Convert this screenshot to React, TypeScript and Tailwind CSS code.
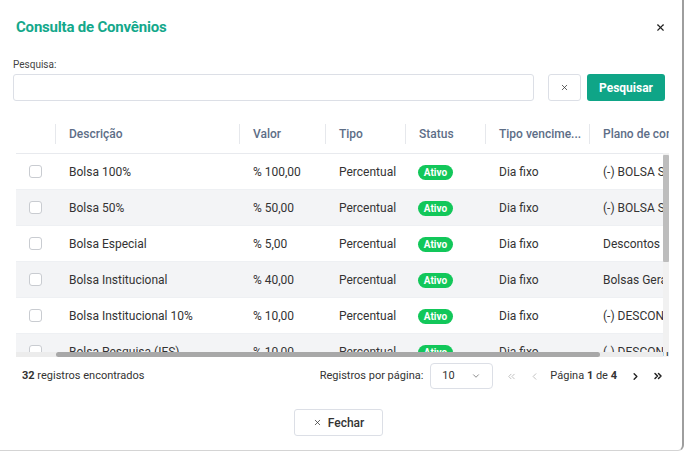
import React from 'react';
import { X, ChevronDown, ChevronsLeft, ChevronLeft, ChevronRight, ChevronsRight } from 'lucide-react';

interface Convenio {
  descricao: string;
  valor: string;
  tipo: string;
  status: string;
  vencimento: string;
  plano: string;
}

const convenios: Convenio[] = [
  { descricao: 'Bolsa 100%', valor: '% 100,00', tipo: 'Percentual', status: 'Ativo', vencimento: 'Dia fixo', plano: '(-) BOLSA SWE 100%' },
  { descricao: 'Bolsa 50%', valor: '% 50,00', tipo: 'Percentual', status: 'Ativo', vencimento: 'Dia fixo', plano: '(-) BOLSA SOCIAL 50%' },
  { descricao: 'Bolsa Especial', valor: '% 5,00', tipo: 'Percentual', status: 'Ativo', vencimento: 'Dia fixo', plano: 'Descontos na mensalidade' },
  { descricao: 'Bolsa Institucional', valor: '% 40,00', tipo: 'Percentual', status: 'Ativo', vencimento: 'Dia fixo', plano: 'Bolsas Gerais' },
  { descricao: 'Bolsa Institucional 10%', valor: '% 10,00', tipo: 'Percentual', status: 'Ativo', vencimento: 'Dia fixo', plano: '(-) DESCONTOS CONCEDIDOS' },
  { descricao: 'Bolsa Pesquisa (IES)', valor: '% 10,00', tipo: 'Percentual', status: 'Ativo', vencimento: 'Dia fixo', plano: '(-) DESCONTOS CONCEDIDOS' },
];

const columns = [
  { label: 'Descrição', width: 'w-[184px]' },
  { label: 'Valor', width: 'w-[86px]' },
  { label: 'Tipo', width: 'w-[80px]' },
  { label: 'Status', width: 'w-[80px]' },
  { label: 'Tipo vencime...', width: 'w-[104px]' },
  { label: 'Plano de contas', width: 'w-[200px]' },
];

const HeaderCell = ({ label, width }: { label: string; width: string }) => (
  <th className={`${width} p-0 font-medium text-left`}>
    <div className="flex items-center h-[38px] overflow-hidden whitespace-nowrap">
      <span className="w-px h-5 bg-[#e6e8ec] mr-[13px] shrink-0" />
      {label}
    </div>
  </th>
);

export default function App() {
  return (
    <div className="w-[684px] h-[451px] bg-white border-r-2 border-b border-r-[#9e9e9e] border-b-[#d4d4d4] rounded-br-md font-['Roboto',sans-serif] text-[#333]">
      {/* cabeçalho */}
      <div className="flex items-center justify-between h-[54px] pl-4 pr-[16px]">
        <h2 className="text-[15px] font-bold text-[#14a88b] tracking-[-0.2px]">Consulta de Convênios</h2>
        <X className="w-[11px] h-[11px] text-[#222]" strokeWidth={2.5} />
      </div>

      {/* busca */}
      <div className="pl-[13px] pr-[16px]">
        <label className="block text-[10px] leading-[12px] text-[#444] mt-[5px] mb-[3px]">Pesquisa:</label>
        <div className="flex items-center h-[27px]">
          <input className="w-[521px] shrink-0 h-full border border-[#dcdfe6] rounded-[3px] outline-none" />
          <button className="ml-[14px] w-[33px] shrink-0 h-full border border-[#dcdfe6] rounded-[3px] flex items-center justify-center">
            <X className="w-[9px] h-[9px] text-[#333]" strokeWidth={2} />
          </button>
          <button className="ml-[6px] w-[78px] shrink-0 h-full bg-[#0fa587] rounded-[3px] text-white text-[12px] font-bold">
            Pesquisar
          </button>
        </div>
      </div>

      {/* tabela */}
      <div className="relative ml-4 mt-[14px] w-[653px] h-[242px] overflow-hidden">
        <table className="table-fixed border-collapse w-[773px] text-[12px]">
          <thead>
            <tr className="text-[#5d6e87] border-b border-[#e8eaee] text-[12px]">
              <th className="w-[39px] p-0" />
              {columns.map((c) => (
                <HeaderCell key={c.label} label={c.label} width={c.width} />
              ))}
            </tr>
          </thead>
          <tbody>
            {convenios.map((c, i) => (
              <tr key={c.descricao} className={`h-[36px] border-b border-[#eef0f3] ${i % 2 === 1 ? 'bg-[#f3f4f6]' : 'bg-white'}`}>
                <td className="p-0">
                  <div className="ml-[13px] w-[13px] h-[13px] border border-[#c9ccd1] rounded-[3px] bg-white" />
                </td>
                <td className="pl-[14px] whitespace-nowrap">{c.descricao}</td>
                <td className="pl-[14px] whitespace-nowrap">{c.valor}</td>
                <td className="pl-[14px] whitespace-nowrap">{c.tipo}</td>
                <td className="pl-[13px]">
                  <span className="inline-flex items-center justify-center w-[35px] h-[15px] rounded-full bg-[#12c75a] text-white text-[10px] font-bold">
                    {c.status}
                  </span>
                </td>
                <td className="pl-[14px] whitespace-nowrap">{c.vencimento}</td>
                <td className="pl-[14px] whitespace-nowrap overflow-hidden">{c.plano}</td>
              </tr>
            ))}
          </tbody>
        </table>

        {/* barra de rolagem vertical */}
        <div className="absolute right-0 top-[38px] w-[6px] h-[199px] bg-[#f1f1f1]">
          <div className="mt-[2px] h-[107px] bg-[#bdbdbd] rounded-[1px]" />
        </div>
        {/* barra de rolagem horizontal */}
        <div className="absolute left-0 bottom-0 w-[647px] h-[5px] bg-[#ececec] flex">
          <div className="ml-[40px] w-[544px] h-full bg-[#a8a8a8] rounded-full" />
        </div>
      </div>

      {/* rodapé */}
      <div className="flex items-center justify-between mt-[6px] pl-[22px] pr-[18px] h-[26px] text-[11px] text-[#333]">
        <span>
          <b>32</b> registros encontrados
        </span>
        <div className="flex items-center">
          <span>Registros por página:</span>
          <div className="ml-[7px] w-[63px] h-[26px] border border-[#dcdfe6] rounded-[4px] flex items-center justify-between pl-[11px] pr-[11px]">
            <span>10</span>
            <ChevronDown className="w-[10px] h-[10px] text-[#777]" strokeWidth={2} />
          </div>
          <ChevronsLeft className="ml-[13px] w-[11px] h-[11px] text-[#bbb]" strokeWidth={2} />
          <ChevronLeft className="ml-[12px] w-[11px] h-[11px] text-[#bbb]" strokeWidth={2} />
          <span className="ml-[10px]">
            Página <b>1</b> de <b>4</b>
          </span>
          <ChevronRight className="ml-[13px] w-[11px] h-[11px] text-[#222]" strokeWidth={3} />
          <ChevronsRight className="ml-[11px] w-[12px] h-[12px] text-[#222]" strokeWidth={3} />
        </div>
      </div>

      <div className="flex justify-center mt-[20px] pr-[5px]">
        <button className="w-[89px] h-[27px] border border-[#dcdfe6] rounded-[3px] flex items-center justify-center gap-[6px] text-[12px] font-medium text-[#333]">
          <X className="w-[9px] h-[9px]" strokeWidth={2} />
          Fechar
        </button>
      </div>
    </div>
  );
}
